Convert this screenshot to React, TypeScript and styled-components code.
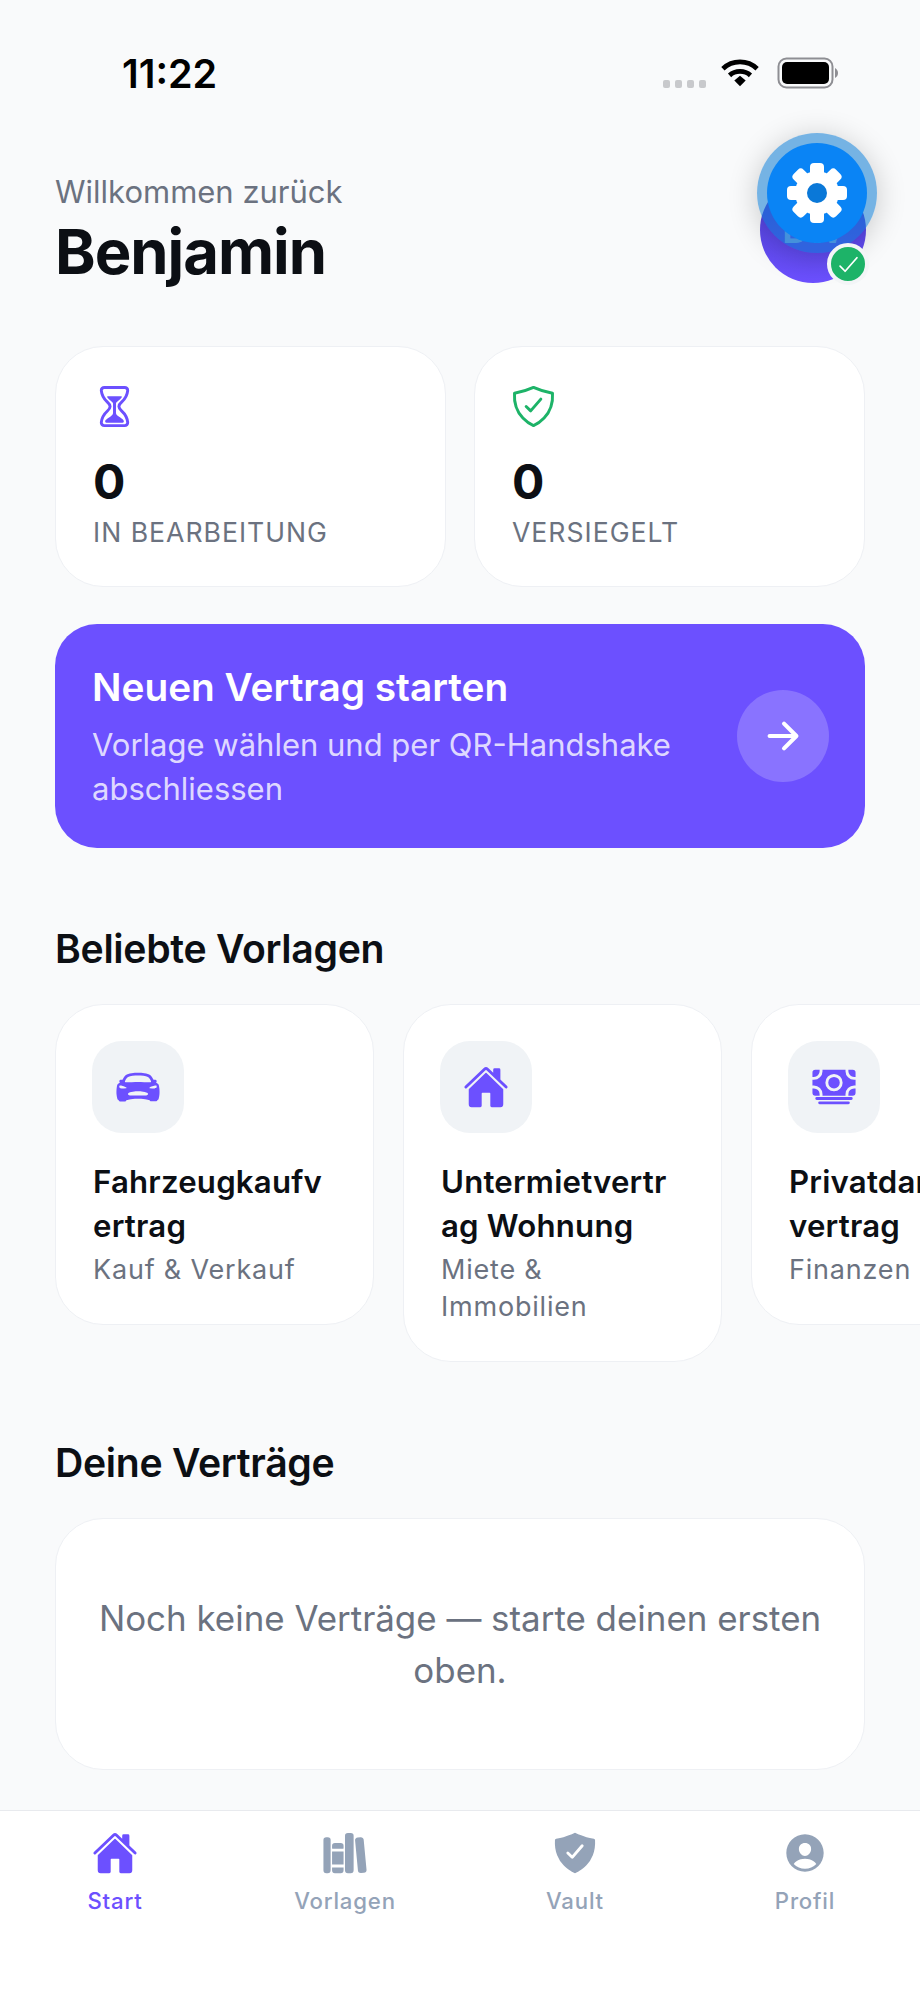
import React from 'react';
import styled, { createGlobalStyle } from 'styled-components';
import {
  IoHourglassOutline,
  IoShieldCheckmarkOutline,
  IoCarSport,
  IoHome,
  IoCash,
  IoLibrary,
  IoShieldCheckmark,
  IoPersonCircle,
  IoArrowForward,
  IoCheckmark,
} from 'react-icons/io5';

const PURPLE = '#6c50ff';
const INK = '#0c0f14';
const GREY = '#6b7280';
const PAGE = '#f9fafb';

const GlobalStyle = createGlobalStyle`
  html, body {
    margin: 0;
    padding: 0;
    background: ${PAGE};
  }
  * { box-sizing: border-box; }
`;

const Screen = styled.div`
  position: relative;
  width: 920px;
  height: 2000px;
  overflow: hidden;
  background: ${PAGE};
  font-family: Inter, "Noto Sans", sans-serif;
  display: flex;
  flex-direction: column;
`;

const StatusBar = styled.div`
  height: 100px;
  flex: none;
  padding: 50px 81px 0 122px;
  display: flex;
  justify-content: space-between;
  align-items: flex-start;
`;

const Time = styled.div`
  font-size: 39.5px;
  line-height: 48px;
  font-weight: 600;
  color: #000;
`;

const StatusIcons = styled.div`
  display: flex;
  align-items: center;
  gap: 18px;
  height: 46px;
`;

const SignalDots = styled.div`
  display: flex;
  gap: 5px;
  margin: 22px -3px 0 0;
`;

const SignalDot = styled.span`
  width: 7px;
  height: 8px;
  border-radius: 2px;
  background: #c8c9cc;
`;

const Main = styled.div`
  flex: 1;
  padding: 0 55px;
  min-height: 0;
`;

const Header = styled.div`
  margin-top: 73px;
  height: 116px;
`;

const Welcome = styled.div`
  font-size: 31px;
  line-height: 38px;
  color: ${GREY};
`;

const Name = styled.div`
  margin-top: 5px;
  font-size: 61.5px;
  line-height: 72px;
  font-weight: 700;
  letter-spacing: -1px;
  color: ${INK};
`;

const Avatar = styled.div`
  position: absolute;
  left: 760px;
  top: 177px;
  width: 106px;
  height: 106px;
  border-radius: 50%;
  background: linear-gradient(180deg, #4a3fd0 0%, ${PURPLE} 100%);
  display: flex;
  align-items: center;
  justify-content: center;
  font-size: 36px;
  font-weight: 700;
  color: #8fb0e6;
`;

const VerifiedBadge = styled.div`
  position: absolute;
  left: 827px;
  top: 243px;
  width: 42px;
  height: 42px;
  border-radius: 50%;
  background: #1db368;
  border: 4px solid #f3f5f7;
  color: #fff;
  font-size: 27px;
  display: flex;
  align-items: center;
  justify-content: center;
`;

const GearHalo = styled.div`
  position: absolute;
  left: 757px;
  top: 133px;
  width: 120px;
  height: 120px;
  border-radius: 50%;
  background: rgba(10, 120, 210, 0.55);
  box-shadow: 0 4px 30px rgba(0, 0, 0, 0.2);
  display: flex;
  align-items: center;
  justify-content: center;
`;

const GearButton = styled.div`
  width: 100px;
  height: 100px;
  border-radius: 50%;
  background: #0a84f5;
  display: flex;
  align-items: center;
  justify-content: center;
`;

const StatRow = styled.div`
  margin-top: 57px;
  display: grid;
  grid-template-columns: 391px 391px;
  gap: 28px;
`;

const Card = styled.div`
  background: #fff;
  border: 1px solid #eef0f4;
  border-radius: 48px;
`;

const StatCard = styled(Card)`
  height: 241px;
  padding: 36px 37px;
  display: flex;
  flex-direction: column;
`;

const StatIcon = styled.div<{ $color: string }>`
  height: 42px;
  margin-left: -2px;
  font-size: 47px;
  line-height: 0;
  color: ${(p) => p.$color};
`;

const StatValue = styled.div`
  margin-top: 26px;
  font-size: 48px;
  line-height: 62px;
  font-weight: 700;
  color: ${INK};
`;

const StatLabel = styled.div`
  margin-top: 1px;
  font-size: 26.6px;
  line-height: 36px;
  font-weight: 400;
  letter-spacing: 1px;
  color: ${GREY};
`;

const StartBanner = styled.div`
  margin-top: 37px;
  height: 224px;
  border-radius: 42px;
  background: ${PURPLE};
  padding: 0 36px 0 37px;
  display: flex;
  align-items: center;
  justify-content: space-between;
`;

const BannerText = styled.div`
  width: 620px;
`;

const BannerTitle = styled.div`
  font-size: 38.8px;
  line-height: 52px;
  font-weight: 600;
  color: #fff;
`;

const BannerSub = styled.div`
  margin-top: 10px;
  font-size: 31px;
  line-height: 44px;
  color: rgba(255, 255, 255, 0.8);
`;

const ArrowCircle = styled.div`
  width: 92px;
  height: 92px;
  border-radius: 50%;
  background: rgba(255, 255, 255, 0.2);
  color: #fff;
  font-size: 44px;
  display: flex;
  align-items: center;
  justify-content: center;
`;

const SectionTitle = styled.div<{ $top: number }>`
  margin-top: ${(p) => p.$top}px;
  font-size: 39.2px;
  line-height: 50px;
  font-weight: 600;
  letter-spacing: -0.3px;
  color: ${INK};
`;

const TemplateRow = styled.div`
  margin-top: 30px;
  width: 865px;
  display: flex;
  align-items: flex-start;
  gap: 29px;
  overflow: hidden;
`;

const TemplateCard = styled(Card)`
  flex: none;
  width: 319px;
  padding: 36px 37px;
`;

const TemplateIcon = styled.div`
  width: 92px;
  height: 92px;
  margin-left: -1px;
  border-radius: 30px;
  background: #f0f3f6;
  color: ${PURPLE};
  font-size: 46px;
  display: flex;
  align-items: center;
  justify-content: center;
`;

const TemplateTitle = styled.div`
  margin-top: 27px;
  font-size: 31.2px;
  line-height: 44px;
  font-weight: 600;
  letter-spacing: 0.2px;
  color: ${INK};
  white-space: nowrap;
`;

const TemplateSub = styled.div`
  margin-top: 3px;
  font-size: 27px;
  line-height: 37px;
  letter-spacing: 0.8px;
  color: ${GREY};
`;

const EmptyCard = styled(Card)`
  margin-top: 30px;
  height: 252px;
  padding: 0 36px;
  display: flex;
  align-items: center;
  justify-content: center;
  text-align: center;
  font-size: 34.9px;
  line-height: 52px;
  color: ${GREY};
`;

const TabBar = styled.div`
  flex: none;
  height: 190px;
  background: #fff;
  border-top: 1px solid #e8eaee;
  padding-top: 19px;
  display: grid;
  grid-template-columns: repeat(4, 230px);
`;

const Tab = styled.div<{ $active?: boolean }>`
  display: flex;
  flex-direction: column;
  align-items: center;
  color: ${(p) => (p.$active ? PURPLE : '#94a3b8')};
  font-size: 46px;
  line-height: 0;
`;

const TabLabel = styled.div`
  margin-top: 9px;
  font-size: 22.2px;
  line-height: 32px;
  font-weight: 500;
  letter-spacing: 0.8px;
`;

const GearIcon = () => (
  <svg width="62" height="62" viewBox="0 0 62 62">
    {[0, 45, 90, 135, 180, 225, 270, 315].map((a) => (
      <rect key={a} x="24" y="1" width="14" height="16" rx="4" fill="#fff" transform={`rotate(${a} 31 31)`} />
    ))}
    <circle cx="31" cy="31" r="22" fill="#fff" />
    <circle cx="31" cy="31" r="10" fill="#0a78d8" />
  </svg>
);

const WifiIcon = () => (
  <svg width="38" height="30" viewBox="0 0 40 30">
    <path d="M2 10.5C12 1 28 1 38 10.5" fill="none" stroke="#000" strokeWidth="5" />
    <path d="M9 17.5C15 12 25 12 31 17.5" fill="none" stroke="#000" strokeWidth="5" />
    <path d="M14 23L20 18L26 23L20 29Z" fill="#000" />
  </svg>
);

const BatteryIcon = () => (
  <svg width="62" height="32" viewBox="0 0 62 32">
    <rect x="1.5" y="1.5" width="54" height="29" rx="8" fill="none" stroke="#8e8e93" strokeWidth="2" />
    <rect x="5" y="5" width="47" height="22" rx="5" fill="#000" />
    <path d="M58 11C60 12 61 14 61 16C61 18 60 20 58 21Z" fill="#8e8e93" />
  </svg>
);

const stats = [
  { icon: <IoHourglassOutline />, color: PURPLE, value: '0', label: 'IN BEARBEITUNG' },
  { icon: <IoShieldCheckmarkOutline />, color: '#1db368', value: '0', label: 'VERSIEGELT' },
];

// titles are cut where the app's narrow card wraps them
const templates = [
  { icon: <IoCarSport />, title: ['Fahrzeugkaufv', 'ertrag'], sub: 'Kauf & Verkauf' },
  { icon: <IoHome />, title: ['Untermietvertr', 'ag Wohnung'], sub: 'Miete & Immobilien' },
  { icon: <IoCash />, title: ['Privatdarlehens', 'vertrag'], sub: 'Finanzen' },
];

const tabs = [
  { icon: <IoHome />, label: 'Start', active: true },
  { icon: <IoLibrary />, label: 'Vorlagen' },
  { icon: <IoShieldCheckmark />, label: 'Vault' },
  { icon: <IoPersonCircle />, label: 'Profil' },
];

export default function App() {
  return (
    <Screen>
      <GlobalStyle />
      <StatusBar>
        <Time>11:22</Time>
        <StatusIcons>
          <SignalDots>
            <SignalDot />
            <SignalDot />
            <SignalDot />
            <SignalDot />
          </SignalDots>
          <WifiIcon />
          <BatteryIcon />
        </StatusIcons>
      </StatusBar>

      <Main>
        <Header>
          <Welcome>Willkommen zurück</Welcome>
          <Name>Benjamin</Name>
        </Header>

        <StatRow>
          {stats.map((s) => (
            <StatCard key={s.label}>
              <StatIcon $color={s.color}>{s.icon}</StatIcon>
              <StatValue>{s.value}</StatValue>
              <StatLabel>{s.label}</StatLabel>
            </StatCard>
          ))}
        </StatRow>

        <StartBanner>
          <BannerText>
            <BannerTitle>Neuen Vertrag starten</BannerTitle>
            <BannerSub>Vorlage wählen und per QR-Handshake abschliessen</BannerSub>
          </BannerText>
          <ArrowCircle>
            <IoArrowForward />
          </ArrowCircle>
        </StartBanner>

        <SectionTitle $top={76}>Beliebte Vorlagen</SectionTitle>
        <TemplateRow>
          {templates.map((t) => (
            <TemplateCard key={t.sub}>
              <TemplateIcon>{t.icon}</TemplateIcon>
              <TemplateTitle>
                {t.title[0]}
                <br />
                {t.title[1]}
              </TemplateTitle>
              <TemplateSub>{t.sub}</TemplateSub>
            </TemplateCard>
          ))}
        </TemplateRow>

        <SectionTitle $top={76}>Deine Verträge</SectionTitle>
        <EmptyCard>Noch keine Verträge — starte deinen ersten oben.</EmptyCard>
      </Main>

      <TabBar>
        {tabs.map((t) => (
          <Tab key={t.label} $active={t.active}>
            {t.icon}
            <TabLabel>{t.label}</TabLabel>
          </Tab>
        ))}
      </TabBar>

      <Avatar>BW</Avatar>
      <GearHalo>
        <GearButton>
          <GearIcon />
        </GearButton>
      </GearHalo>
      <VerifiedBadge>
        <IoCheckmark />
      </VerifiedBadge>
    </Screen>
  );
}
